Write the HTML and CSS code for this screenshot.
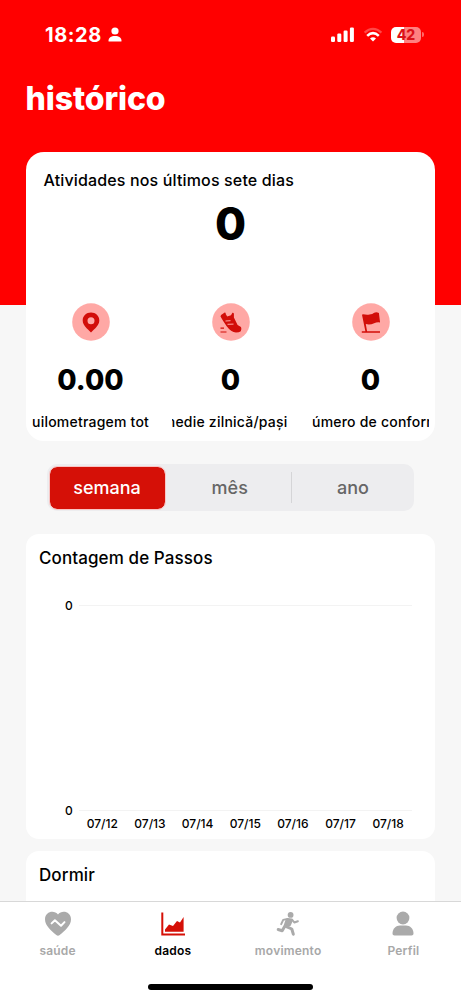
FILE: index.html
```html
<!DOCTYPE html>
<html lang="pt">
<head>
<meta charset="utf-8">
<title>histórico</title>
<link rel="stylesheet" href="styles.css">
</head>
<body>
<div class="app">
  <header class="status">
    <span class="time">18:28</span>
    <svg class="person" width="14" height="15" viewBox="0 0 14 15" fill="#fff"><circle cx="7" cy="4" r="3.600"/><path d="M.5 14c0-3.300 2.500-5 6.500-5s6.500 1.700 6.500 5q0 .5-.6.500H1.100q-.6 0-.6-.5z"/></svg>
    <svg class="signal" width="24" height="16" viewBox="0 0 24 16" fill="#fff"><rect x="0" y="9.500" width="4" height="5.500" rx="1.200"/><rect x="6.300" y="6.500" width="4" height="8.500" rx="1.200"/><rect x="12.600" y="3.500" width="4" height="11.500" rx="1.200"/><rect x="18.900" y="0.500" width="4" height="14.500" rx="1.200"/></svg>
    <svg class="wifi" width="20" height="16" viewBox="0 0 20 16" fill="none" stroke="#fff"><path d="M1.600 5.600Q10-2 18.400 5.600" stroke-width="2.200" opacity=".28"/><path d="M4.200 8.900Q10 3.500 15.800 8.900" stroke-width="2.600"/><path d="M7 11.500Q10 9 13 11.500L10 14.600z" fill="#fff" stroke="none"/></svg>
    <div class="battery"><span>42</span></div>
    <i class="nub"></i>
  </header>
  <h1>histórico</h1>

  <section class="summary">
    <h2>Atividades nos últimos sete dias</h2>
    <div class="total">0</div>
    <div class="stats">
      <div class="stat">
        <svg class="badge" viewBox="0 0 38 38"><circle cx="19" cy="19" r="18.800" fill="#ffa8a5"/><path fill="#d20d09" fill-rule="evenodd" d="M19 9.600c-4.700 0-8.300 3.500-8.300 8 0 4.800 4.300 8 8.300 12 4-4 8.300-7.200 8.300-12 0-4.500-3.600-8-8.300-8zm0 4.700a3.500 3.500 0 1 1 0 7 3.500 3.500 0 0 1 0-7z"/></svg>
        <strong>0.00</strong>
        <div class="label first"><span>uilometragem tota</span></div>
      </div>
      <div class="stat">
        <svg class="badge" viewBox="0 0 38 38"><circle cx="19" cy="19" r="18.800" fill="#ffa8a5"/><path fill="#d20d09" d="M8.500 13.500q.5-2 4.200-4 1.300-.3 1 1.500l1.500 2.500 3.800-1.200 1.400-2.500q1.500-.2 1.500 1.200v3.500l3.700 7.500 3.400 2q1 2.500-.2 4.200-1.500 1.300-4.800 1.300-5-.3-9.500-6.500-3.500-5-6-9.500z"/><path d="M13.500 18l5-.3M15.500 21.300l6-.2" stroke="#ffa8a5" stroke-width="1"/><path d="M8.500 25.200h3.500M8.500 29h6" stroke="#d20d09" stroke-width="1.200"/></svg>
        <strong>0</strong>
        <div class="label second"><span>medie zilnică/pași</span></div>
      </div>
      <div class="stat">
        <svg class="badge" viewBox="0 0 38 38"><circle cx="19" cy="19" r="18.800" fill="#ffa8a5"/><path fill="#d20d09" d="M10 11.700l1-.5q3.500.8 6.500.3 3-.4 4.700-1.800 2.200-.8 4.700.2l1.200 9.500q-3-.6-6 .8-4 2-8.300.9l1.400 7.900h-1.700z"/><path d="M9.800 29h18.200" stroke="#d20d09" stroke-width="1.300"/></svg>
        <strong>0</strong>
        <div class="label third"><span>úmero de conform</span></div>
      </div>
    </div>
  </section>

  <nav class="segments">
    <span class="segment active">semana</span>
    <span class="segment middle">mês</span>
    <i class="divider"></i>
    <span class="segment">ano</span>
  </nav>

  <section class="card steps">
    <h3>Contagem de Passos</h3>
    <div class="chart">
      <div class="tick"><span>0</span><i></i></div>
      <div class="tick"><span>0</span><i></i></div>
    </div>
    <div class="dates"><span>07/12</span><span>07/13</span><span>07/14</span><span>07/15</span><span>07/16</span><span>07/17</span><span>07/18</span></div>
  </section>

  <section class="card sleep"><h3>Dormir</h3></section>

  <footer>
    <div class="tabs">
      <div class="tab">
        <svg width="28" height="26" viewBox="0 0 28 26"><path fill="#aaa" d="M14 3.500C10.500-1.500 1 .2 1 8.200c0 6.800 6.500 11.500 11.300 15.800q1.700 1.500 3.400 0C20.500 19.700 27 15 27 8.200 27 .2 17.500-1.500 14 3.500z"/><path d="M7.600 12.400l3.300-3.200 6.100 5.500 3.500-3.600" fill="none" stroke="#fff" stroke-width="2" stroke-linecap="round" stroke-linejoin="round"/></svg>
        <span>saúde</span>
      </div>
      <div class="tab current">
        <svg width="28" height="26" viewBox="0 0 28 26"><path d="M3.300 1.500v22H26" fill="none" stroke="#d51007" stroke-width="2"/><path fill="#d51007" d="M6 20.800v-2.300l4-5 4 1.600 4-5.100 3 1.500L24.600 6v14.800z"/></svg>
        <span>dados</span>
      </div>
      <div class="tab">
        <svg width="28" height="26" viewBox="0 0 28 26" fill="none" stroke="#aaa" stroke-width="2.500" stroke-linecap="round" stroke-linejoin="round"><circle cx="16.600" cy="3.900" r="2.900" fill="#aaa" stroke="none"/><path d="M7.200 13.200l2-4.300 4.300-1 4.500.6 2.300 3 3.600-1.300" stroke-width="2"/><path d="M12.800 9l-2 5.800 4.800-.8 2-4.500z" fill="#aaa"/><path d="M11.800 15.300l6 2.700 1.500 5.200" stroke-width="3"/><path d="M10.500 15.800l-2.300 3.900-4-1.200" stroke-width="3"/></svg>
        <span>movimento</span>
      </div>
      <div class="tab">
        <svg width="28" height="26" viewBox="0 0 28 26" fill="#aaa"><circle cx="14" cy="7" r="6.400"/><path d="M3.500 22.500c0-5 3.500-8 7.500-8h6c4 0 7.500 3 7.500 8 0 1.300-.8 2-2 2h-17c-1.200 0-2-.7-2-2z"/></svg>
        <span>Perfil</span>
      </div>
    </div>
    <div class="home"></div>
  </footer>
</div>
</body>
</html>
```
FILE: styles.css
```css
* { box-sizing: border-box; }
body { margin: 0; font-family: Inter, "Liberation Sans", sans-serif; color: #000; }
h1, h2, h3 { margin: 0; white-space: nowrap; }
svg { display: block; flex: none; }
.app { width: 461px; height: 999px; overflow: hidden; display: flex; flex-direction: column; background: linear-gradient(#f00 0 305px, #f7f7f7 305px); }

.status { height: 69px; padding-left: 45px; display: flex; align-items: center; color: #fff; flex: none; }
.time { width: 58px; font-size: 20px; font-weight: 700; letter-spacing: .6px; white-space: nowrap; }
.person { margin-left: 5px; }
.signal { margin-left: 209px; }
.wifi { margin-left: 8px; }
.battery { width: 30px; height: 16px; margin-left: 8px; border-radius: 5px; background: linear-gradient(90deg, #fff 43%, #ff8180 43%); color: #dd1219; font-size: 14px; line-height: 16px; font-weight: 800; text-align: center; }
.nub { width: 2px; height: 5px; margin-left: 1px; border-radius: 0 2px 2px 0; background: #ff6b6b; }
h1 { height: 83px; padding-left: 25.500px; color: #fff; font-size: 32px; line-height: 59px; font-weight: 800; letter-spacing: -.1px; flex: none; }

.summary { height: 289px; margin: 0 26px; border-radius: 18px; background: #fff; overflow: hidden; flex: none; }
h2 { height: 48px; padding: 18px 0 0 17.500px; font-size: 16px; line-height: 20px; font-weight: 550; letter-spacing: .15px; }
.total { height: 103px; font-size: 45px; line-height: 48px; font-weight: 800; text-align: center; }
.stats { display: grid; grid-template-columns: 117px 117px 117px; justify-content: center; column-gap: 23px; }
.stat { display: flex; flex-direction: column; align-items: center; min-width: 0; }
.badge { width: 38px; height: 38px; }
strong { margin-top: 20px; font-size: 28px; line-height: 38px; font-weight: 800; }
.label { width: 117px; height: 24px; margin-top: 11px; display: flex; overflow: hidden; white-space: nowrap; font-size: 14px; line-height: 24px; font-weight: 550; letter-spacing: .22px; }
.second { justify-content: flex-end; padding-right: 1.500px; }

.segments { height: 47px; margin: 23px 47px 0; padding: 2px 0 2px 1.500px; display: flex; align-items: center; border-radius: 10px; background: #ededef; color: #666; flex: none; }
.segment { flex: 1; text-align: center; font-size: 18px; line-height: 43px; font-weight: 550; }
.active { flex: none; width: 117px; height: 44px; border: 1px solid #f9c6c5; border-radius: 8px; background: #d51007; background-clip: padding-box; color: #fff; line-height: 42px; }
.middle { flex: none; width: 125.500px; padding-left: 3px; }
.divider { width: 1px; height: 31px; background: #d5d5d7; }

.card { margin: 0 26px; border-radius: 13px; background: #fff; flex: none; }
.steps { height: 305px; margin-top: 23px; }
h3 { padding: 13px 0 0 13px; font-size: 17px; line-height: 23px; font-weight: 550; letter-spacing: .1px; }
.chart { height: 223px; margin-top: 26px; display: flex; flex-direction: column; justify-content: space-between; }
.tick { height: 18px; padding: 0 23px 0 39px; display: flex; align-items: center; font-size: 12px; font-weight: 550; }
.tick i { height: 1px; flex: 1; margin-left: 6px; background: #f3f3f3; }
.dates { height: 16px; margin: -3px 23px 0 52.500px; display: grid; grid-template-columns: repeat(7, 1fr); text-align: center; font-size: 12px; line-height: 16px; font-weight: 550; }
.sleep { height: 80px; margin-top: 12px; }

footer { height: 98px; margin-top: -30px; border-top: 1px solid #d8d8d8; background: #fff; flex: none; z-index: 1; }
.tabs { height: 82px; display: grid; grid-template-columns: repeat(4, 1fr); }
.tab { padding-top: 9px; display: flex; flex-direction: column; align-items: center; gap: 5px; color: #a8a8a8; font-size: 12px; line-height: 17px; font-weight: 600; letter-spacing: .2px; }
.current { color: #000; }
.home { width: 165px; height: 6px; margin: 0 auto; border-radius: 3px; background: #000; }
```
